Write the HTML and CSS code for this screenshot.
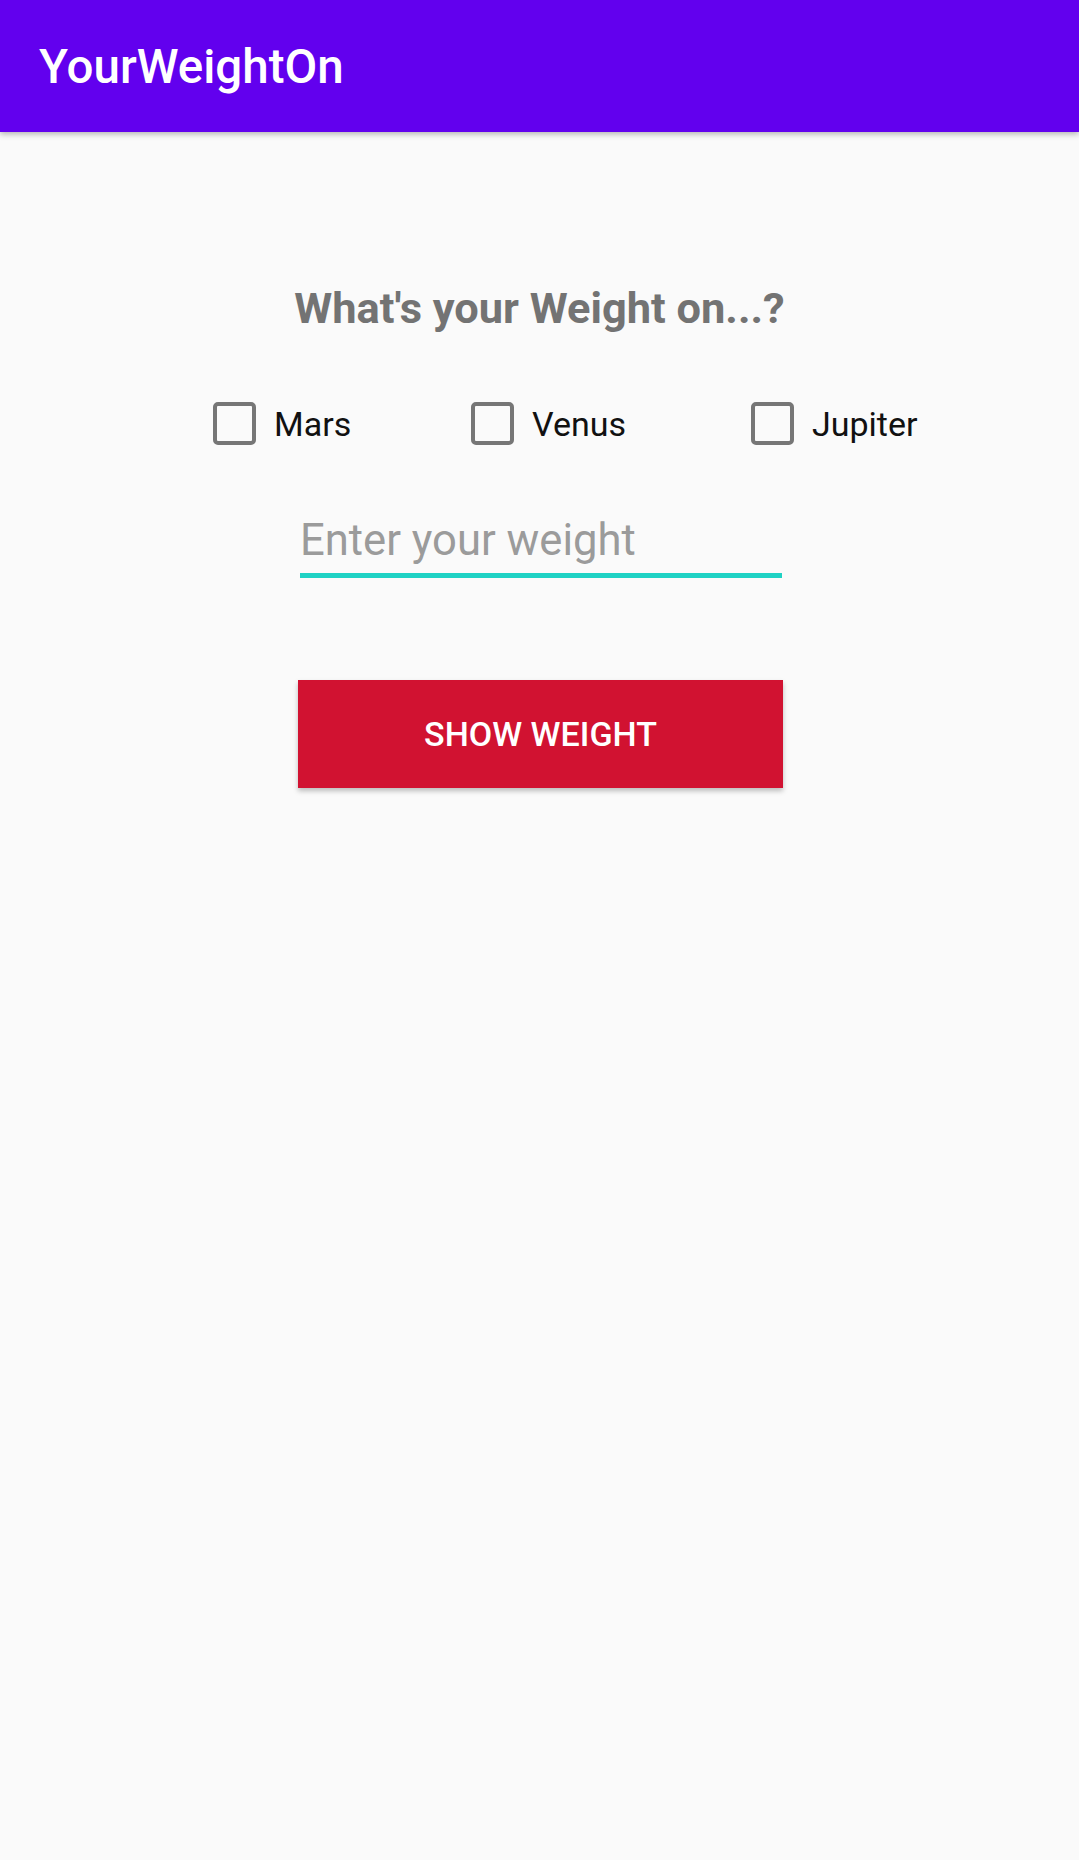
FILE: index.html
```html
<!DOCTYPE html>
<html>
<head>
<meta charset="utf-8">
<link rel="stylesheet" href="styles.css">
</head>
<body>
<header class="appbar"><h1 class="title">YourWeightOn</h1></header>
<main class="content">
  <h2 class="question">What's your Weight on...?</h2>
  <div class="planets">
    <label class="planet planet-mars"><span class="box"></span><span class="label">Mars</span></label>
    <label class="planet planet-venus"><span class="box"></span><span class="label">Venus</span></label>
    <label class="planet planet-jupiter"><span class="box"></span><span class="label">Jupiter</span></label>
  </div>
  <div class="field"><span class="hint">Enter your weight</span></div>
  <button class="show-btn">SHOW WEIGHT</button>
</main>
</body>
</html>
```
FILE: styles.css
```css
html, body {
  margin: 0;
  padding: 0;
  background: #fafafa;
}
body {
  width: 1079px;
  min-height: 1860px;
  font-family: Roboto, "Liberation Sans", sans-serif;
}
.appbar {
  position: relative;
  z-index: 2;
  box-sizing: border-box;
  height: 132px;
  padding: 44px 0 0 39px;
  background: #6200ee;
  box-shadow: 0 2px 6px rgba(0, 0, 0, 0.3);
}
.title {
  margin: 0;
  font-size: 47.5px;
  line-height: 1;
  font-weight: 500;
  color: #ffffff;
}
.content {
  display: flex;
  flex-direction: column;
  align-items: flex-start;
}
.question {
  align-self: stretch;
  margin: 155px 0 0;
  height: 43px;
  text-align: center;
  font-size: 43.4px;
  line-height: 1;
  font-weight: 700;
  color: #737373;
}
.planets {
  display: flex;
  align-items: center;
  margin: 72px 0 0 213px;
  height: 43px;
}
.planet {
  display: flex;
  align-items: center;
}
.planet-mars { width: 258px; }
.planet-venus { width: 280px; }
.box {
  box-sizing: border-box;
  width: 43px;
  height: 43px;
  border: 4.75px solid #767676;
  border-radius: 5px;
}
.label {
  margin-left: 18px;
  font-size: 34px;
  line-height: 1;
  color: #111111;
}
.field {
  box-sizing: content-box;
  width: 482px;
  height: 43px;
  margin: 74px 0 0 300px;
  padding-bottom: 11px;
  border-bottom: 5px solid #1fd2c4;
}
.hint {
  display: block;
  font-size: 43.6px;
  line-height: 1;
  color: #9b9b9b;
}
.show-btn {
  width: 485px;
  height: 108px;
  margin: 102px 0 0 298px;
  padding: 0;
  border: none;
  border-radius: 0;
  background: #d11231;
  color: #ffffff;
  font-family: Roboto, "Liberation Sans", sans-serif;
  font-size: 34px;
  font-weight: 500;
  letter-spacing: 0;
  box-shadow: 0 3px 5px rgba(0, 0, 0, 0.25);
}
```
